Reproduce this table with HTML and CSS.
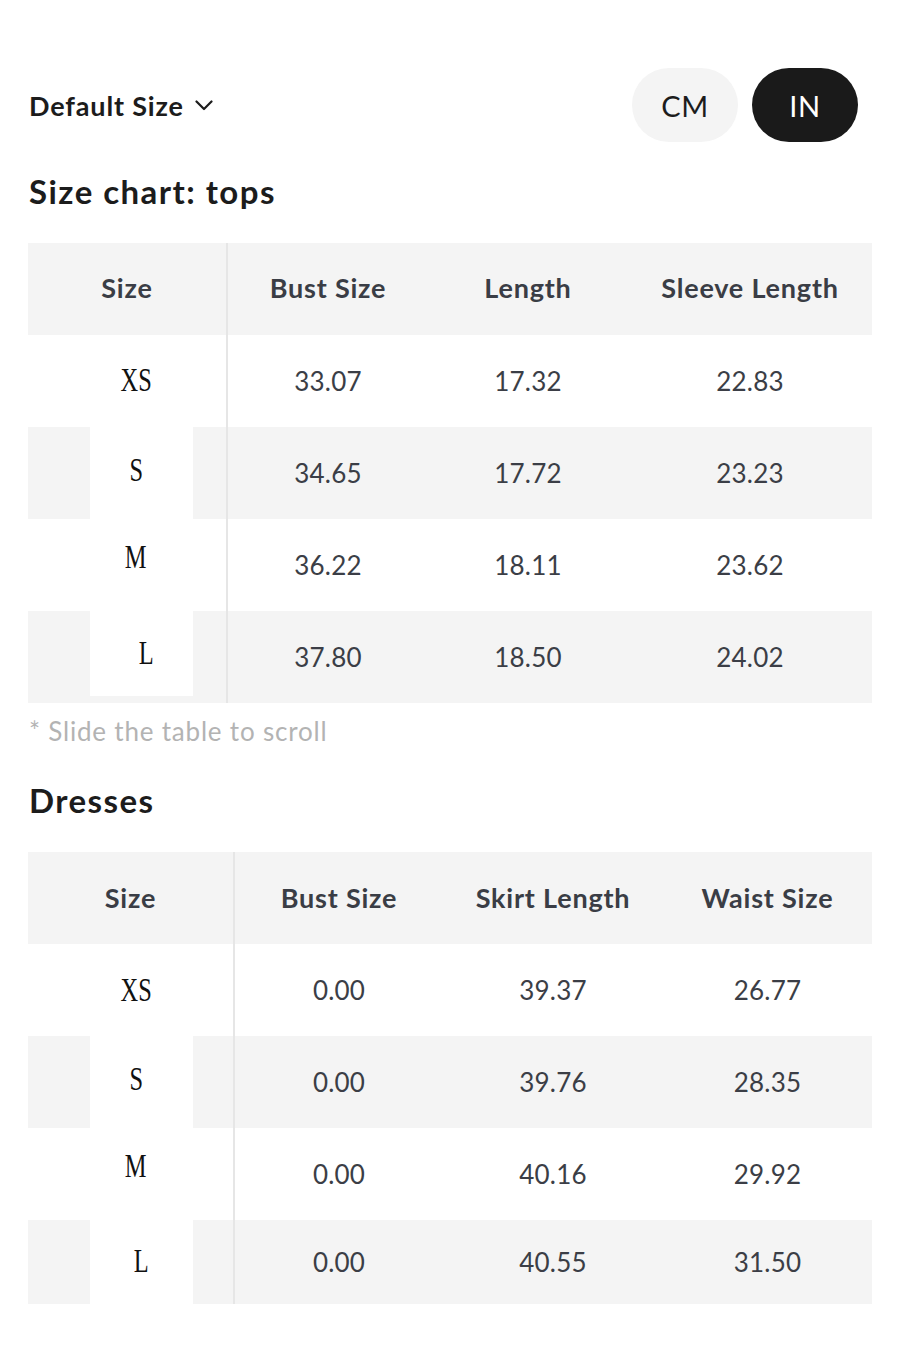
FILE: index.html
```html
<!DOCTYPE html>
<html lang="en">
<head>
<meta charset="utf-8">
<title>Size chart</title>
<link rel="stylesheet" href="styles.css">
</head>
<body>
<div class="page">
  <div class="topbar">
    <div class="default-size">
      <span>Default Size</span>
      <svg class="chev" width="18" height="11" viewBox="0 0 18 11"><polyline points="1.5,1.5 9,9 16.5,1.5" fill="none" stroke="#1c1c1c" stroke-width="2.2" stroke-linecap="round" stroke-linejoin="round"/></svg>
    </div>
    <div class="units">
      <span class="pill">CM</span>
      <span class="pill active">IN</span>
    </div>
  </div>

  <h2 class="title first">Size chart: tops</h2>
  <div class="chart tops">
    <div class="row head">
      <div class="cell size">Size</div>
      <div class="cell">Bust Size</div>
      <div class="cell">Length</div>
      <div class="cell">Sleeve Length</div>
    </div>
    <div class="row">
      <div class="cell size"><div class="patch"><span class="lt">XS</span></div></div>
      <div class="cell">33.07</div>
      <div class="cell">17.32</div>
      <div class="cell">22.83</div>
    </div>
    <div class="row alt">
      <div class="cell size"><div class="patch up4"><span class="lt">S</span></div></div>
      <div class="cell">34.65</div>
      <div class="cell">17.72</div>
      <div class="cell">23.23</div>
    </div>
    <div class="row">
      <div class="cell size"><div class="patch up9"><span class="lt">M</span></div></div>
      <div class="cell">36.22</div>
      <div class="cell">18.11</div>
      <div class="cell">23.62</div>
    </div>
    <div class="row alt">
      <div class="cell size"><div class="patch short right10"><span class="lt">L</span></div></div>
      <div class="cell">37.80</div>
      <div class="cell">18.50</div>
      <div class="cell">24.02</div>
    </div>
  </div>
  <p class="note">* Slide the table to scroll</p>

  <h2 class="title second">Dresses</h2>
  <div class="chart dresses">
    <div class="row head">
      <div class="cell size">Size</div>
      <div class="cell">Bust Size</div>
      <div class="cell">Skirt Length</div>
      <div class="cell">Waist Size</div>
    </div>
    <div class="row">
      <div class="cell size"><div class="patch"><span class="lt">XS</span></div></div>
      <div class="cell">0.00</div>
      <div class="cell">39.37</div>
      <div class="cell">26.77</div>
    </div>
    <div class="row alt">
      <div class="cell size"><div class="patch up5"><span class="lt">S</span></div></div>
      <div class="cell">0.00</div>
      <div class="cell">39.76</div>
      <div class="cell">28.35</div>
    </div>
    <div class="row">
      <div class="cell size"><div class="patch up10"><span class="lt">M</span></div></div>
      <div class="cell">0.00</div>
      <div class="cell">40.16</div>
      <div class="cell">29.92</div>
    </div>
    <div class="row alt last">
      <div class="cell size"><div class="patch right5"><span class="lt">L</span></div></div>
      <div class="cell">0.00</div>
      <div class="cell">40.55</div>
      <div class="cell">31.50</div>
    </div>
  </div>
</div>
</body>
</html>
```

FILE: styles.css
```css
html, body {
  margin: 0;
  padding: 0;
  background: #ffffff;
}

body {
  font-family: Lato, "Noto Sans", "Liberation Sans", sans-serif;
  color: #1c1c1c;
}

.page {
  padding: 68px 28px 0 28px;
}

.topbar {
  display: flex;
  align-items: center;
  justify-content: space-between;
  padding-right: 14px;
  height: 74px;
}

.default-size {
  display: flex;
  align-items: center;
  gap: 11px;
  padding-left: 1px;
  font-size: 27px;
  font-weight: 700;
  letter-spacing: 0.85px;
  color: #1c1c1c;
}

.chev {
  display: block;
  margin-top: 1px;
}

.units {
  display: flex;
  gap: 14px;
}

.pill {
  width: 106px;
  height: 74px;
  border-radius: 37px;
  background: #f4f4f4;
  color: #1c1c1c;
  display: flex;
  align-items: center;
  justify-content: center;
  font-size: 29px;
  font-weight: 400;
  letter-spacing: 0.5px;
}

.pill.active {
  background: #1a1a1a;
  color: #ffffff;
}

.title {
  margin: 0;
  padding-left: 1px;
  font-size: 33px;
  font-weight: 700;
  line-height: 1.2;
  letter-spacing: 1.45px;
  color: #1c1c1c;
}

.title.first {
  margin-top: 30px;
  margin-bottom: 31px;
}

.title.second {
  margin-top: 34px;
  margin-bottom: 32px;
}

.chart {
  width: 844px;
}

.row {
  display: grid;
  height: 92px;
  background: #ffffff;
}

.tops .row {
  grid-template-columns: 200px 200px 200px 244px;
}

.dresses .row {
  grid-template-columns: 207px 208px 220px 209px;
}

.row.head,
.row.alt {
  background: #f4f4f4;
}

.dresses .row.last {
  height: 84px;
}

.cell {
  display: flex;
  align-items: center;
  justify-content: center;
  font-size: 26px;
  font-weight: 400;
  letter-spacing: 0.2px;
  color: #3b3e46;
}

.head .cell {
  font-size: 27px;
  font-weight: 700;
  letter-spacing: 0.8px;
  color: #3a3d45;
  padding-bottom: 2px;
}

.cell.size {
  border-right: 2px solid #e6e6e6;
  box-sizing: border-box;
  justify-content: flex-start;
  align-items: stretch;
}

.head .cell.size {
  justify-content: center;
  align-items: center;
}

.patch {
  margin-left: 62px;
  width: 103px;
  background: #ffffff;
  display: flex;
  align-items: center;
  justify-content: center;
  padding-right: 11px;
  box-sizing: border-box;
}

.patch.short {
  height: 85px;
}

.patch.up4 { padding-bottom: 5px; }
.patch.up5 { padding-bottom: 6px; }
.patch.up9 { padding-bottom: 14px; }
.patch.up10 { padding-bottom: 16px; }
.patch.right10 { padding-right: 0; padding-left: 9px; }
.patch.right5 { padding-right: 0; padding-bottom: 2px; }

.lt {
  display: inline-block;
  font-family: "Liberation Serif", "Times New Roman", serif;
  font-size: 33px;
  color: #111111;
  transform: scaleX(0.74);
  transform-origin: center center;
}

.note {
  margin: 13px 0 0 0;
  padding-left: 1px;
  font-size: 26px;
  line-height: 1.2;
  letter-spacing: 0.8px;
  color: #b3b3b3;
}
```
